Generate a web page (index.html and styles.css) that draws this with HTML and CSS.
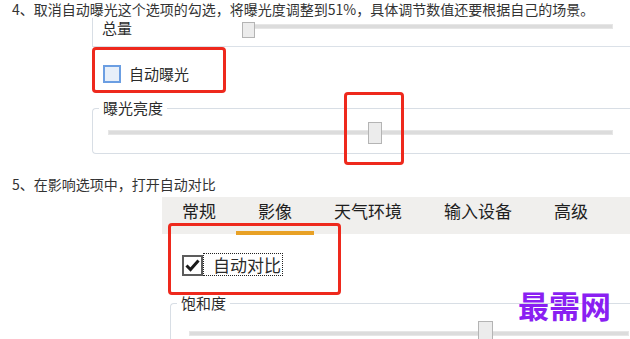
FILE: index.html
```html
<!DOCTYPE html>
<html lang="zh-CN">
<head>
    <meta charset="UTF-8">
    <meta name="viewport" content="width=device-width, initial-scale=1.0">
    <title>自动曝光与自动对比</title>
    <link rel="stylesheet" href="styles.css">
</head>
<body>
    <p class="step step-first">4、取消自动曝光这个选项的勾选，将曝光度调整到51%，具体调节数值还要根据自己的场景。</p>

    <div class="shot shot-exposure">
        <div class="volume-row">
            <span class="field-label">总量</span>
            <div class="slider slider-volume">
                <div class="track"></div>
                <div class="thumb"></div>
            </div>
        </div>

        <div class="highlight auto-exposure">
            <span class="checkbox checkbox-off"></span>
            <span class="check-label">自动曝光</span>
        </div>

        <fieldset class="group group-brightness">
            <legend>曝光亮度</legend>
            <div class="slider slider-brightness">
                <div class="track"></div>
                <div class="thumb"></div>
            </div>
        </fieldset>

        <!-- red mark around the brightness thumb -->
        <div class="marker marker-thumb"></div>
    </div>

    <p class="step step-second">5、在影响选项中，打开自动对比</p>

    <div class="shot shot-image">
        <div class="tabs">
            <span class="tab">常规</span>
            <span class="tab active">影像</span>
            <span class="tab">天气环境</span>
            <span class="tab">输入设备</span>
            <span class="tab">高级</span>
        </div>

        <div class="auto-contrast">
            <span class="checkbox checkbox-on">
                <svg width="17" height="17" viewBox="0 0 17 17">
                    <path d="M2.5 8.5 L6.5 12.5 L14.5 3.5" fill="none" stroke="#1a1a1a" stroke-width="3"/>
                </svg>
            </span>
            <span class="check-label focused">自动对比</span>
        </div>

        <fieldset class="group group-saturation">
            <legend>饱和度</legend>
            <div class="slider slider-saturation">
                <div class="track"></div>
                <div class="thumb"></div>
            </div>
        </fieldset>

        <div class="marker marker-contrast"></div>
    </div>

    <div class="watermark">最需网</div>
</body>
</html>
```

FILE: styles.css
```css
* {
    box-sizing: border-box;
    font-family: "Noto Sans CJK SC", "Noto Sans", sans-serif;
}

html, body {
    height: 339px;
}

body {
    margin: 0;
    background-color: #fff;
    color: #333;
    overflow: hidden;
    position: relative;
}

.step {
    margin: 0;
    padding-left: 12px;
    font-size: 14px;
    line-height: 16px;
    color: #333;
    white-space: nowrap;
}

.step-first {
    padding-top: 1px;
    height: 18px;
}

.step-second {
    margin-top: 21px;
    line-height: 18px;
}

.shot {
    position: relative;
    color: #2b2b2b;
}

/* first screenshot */
.shot-exposure {
    margin-left: 92px;
}

.volume-row {
    display: flex;
    align-items: flex-start;
    height: 29px;
    border-left: 1px solid #d8dee5;
    border-bottom: 1px solid #dbe1e8;
    padding-left: 9px;
}

.field-label {
    font-size: 15px;
    line-height: 15px;
    margin-top: 2px;
}

.slider {
    position: relative;
}

.track {
    position: absolute;
    height: 5px;
    background-color: #dcdcdc;
    border: 1px solid #e6e6e6;
}

.thumb {
    position: absolute;
    background-color: #ececec;
    border: 1px solid #b4b4b4;
}

.slider-volume {
    width: 371px;
    height: 16px;
    margin: 4px 17px 0 auto;
}

.slider-volume .track {
    left: 1px;
    right: 0;
    top: 2px;
}

.slider-volume .thumb {
    left: 0;
    top: 0;
    width: 13px;
    height: 16px;
}

.highlight,
.marker {
    border: 3px solid #ee291d;
    border-radius: 4px;
}

.auto-exposure {
    display: flex;
    align-items: flex-start;
    width: 134px;
    height: 46px;
    padding: 15px 0 0 8px;
    gap: 8px;
}

.checkbox {
    display: inline-flex;
    align-items: center;
    justify-content: center;
    flex-shrink: 0;
}

.checkbox-off {
    width: 18px;
    height: 18px;
    border: 2px solid #6b9ee2;
    background-color: #e7eff9;
}

.check-label {
    font-size: 15px;
    line-height: 18px;
}

.group {
    margin: 6px 0 0;
    padding: 0;
    border: 1px solid #d8dee5;
    border-right: none;
    border-radius: 4px 0 0 4px;
}

.group legend {
    margin-left: 6px;
    padding: 0 4px;
    font-size: 15px;
    line-height: 18px;
}

.slider-brightness {
    width: 505px;
    height: 36px;
    margin-left: 15px;
}

.slider-brightness .track {
    left: 0;
    right: 0;
    top: 13px;
}

.slider-brightness .thumb {
    left: 260px;
    top: 5px;
    width: 14px;
    height: 22px;
}

.marker {
    position: absolute;
}

.marker-thumb {
    left: 252px;
    top: 74px;
    width: 60px;
    height: 73px;
}

/* second screenshot */
.shot-image {
    margin-top: 4px;
    margin-left: 162px;
}

.tabs {
    display: flex;
    gap: 42px;
    height: 37px;
    padding: 3px 0 0 20px;
    background-color: #f0efed;
}

.tab {
    position: relative;
    font-size: 17px;
    line-height: 22px;
    color: #1e1e1e;
}

.tab.active::after {
    content: "";
    position: absolute;
    left: 50%;
    top: 31px;
    width: 78px;
    height: 4px;
    margin-left: -39px;
    background-color: #e8a125;
}

.auto-contrast {
    display: flex;
    align-items: flex-start;
    margin-top: 19px;
    padding-left: 20px;
}

.checkbox-on {
    width: 21px;
    height: 21px;
    margin-top: 2px;
    border: 2px solid #5c5c5c;
    background-color: #fff;
}

.check-label.focused {
    height: 23px;
    padding-left: 9px;
    padding-right: 1px;
    font-size: 17px;
    line-height: 21px;
    border: 1px dotted #222;
}

.group-saturation {
    margin: 18px 0 0 8px;
}

.slider-saturation {
    width: 440px;
    height: 40px;
    margin-left: 18px;
}

.slider-saturation .track {
    left: 0;
    right: 0;
    top: 19px;
}

.slider-saturation .thumb {
    left: 289px;
    top: 9px;
    width: 15px;
    height: 22px;
}

.marker-contrast {
    left: 6px;
    top: 26px;
    width: 173px;
    height: 72px;
}

.watermark {
    position: absolute;
    left: 518px;
    top: 289px;
    font-size: 31px;
    line-height: 31px;
    font-weight: 700;
    color: #8a1ff2;
}
```
